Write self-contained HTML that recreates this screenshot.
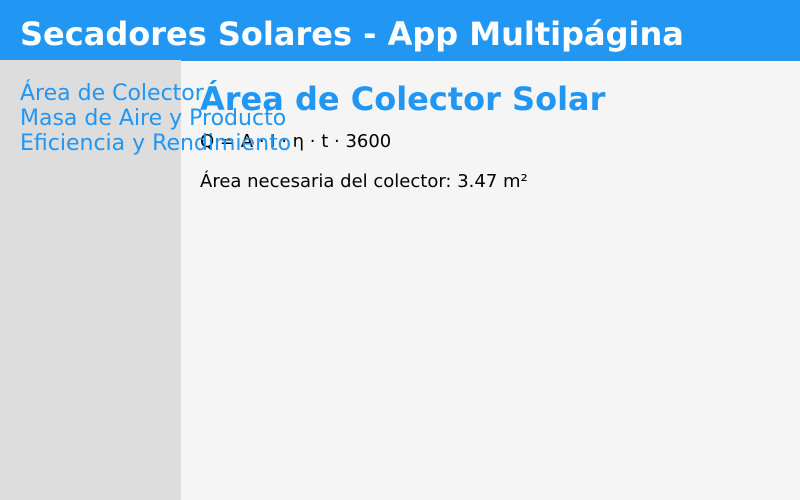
<!DOCTYPE html>
<html><head><meta charset="utf-8"><style>
body{margin:0;width:800px;height:500px;overflow:hidden;font-family:"DejaVu Sans",sans-serif;background:#f5f5f5;position:relative}
.hd{position:absolute;left:0;top:0;width:800px;height:60px;background:#2196f3;color:#fff}
.hd h1{margin:0;position:absolute;left:20px;top:14px;font-size:32px;font-weight:bold;line-height:40px}
.line{position:absolute;left:181px;top:60px;width:619px;height:1px;background:#2196f3}
.sb{position:absolute;left:0;top:60px;width:181px;height:440px;background:#ddd}
.nav{position:absolute;left:20px;top:81px;font-size:22px;line-height:25px;color:#2196f3;z-index:2;white-space:nowrap}
.main{position:absolute;left:200px;top:79px}
.main h2{margin:0;font-size:32px;line-height:40px;color:#2196f3;font-weight:bold}
.main p{margin:0;font-size:18px;line-height:22px;color:#000;position:absolute;white-space:nowrap;left:0}
</style></head><body>
<div class="hd"><h1>Secadores Solares - App Multipágina</h1></div>
<div class="sb"></div><div class="line"></div>
<div class="main"><h2>Área de Colector Solar</h2>
<p style="top:52px">Q = A · I · η · t · 3600</p>
<p style="top:92px">Área necesaria del colector: 3.47 m²</p></div>
<div class="nav">Área de Colector<br>Masa de Aire y Producto<br>Eficiencia y Rendimiento</div>
</body></html>
